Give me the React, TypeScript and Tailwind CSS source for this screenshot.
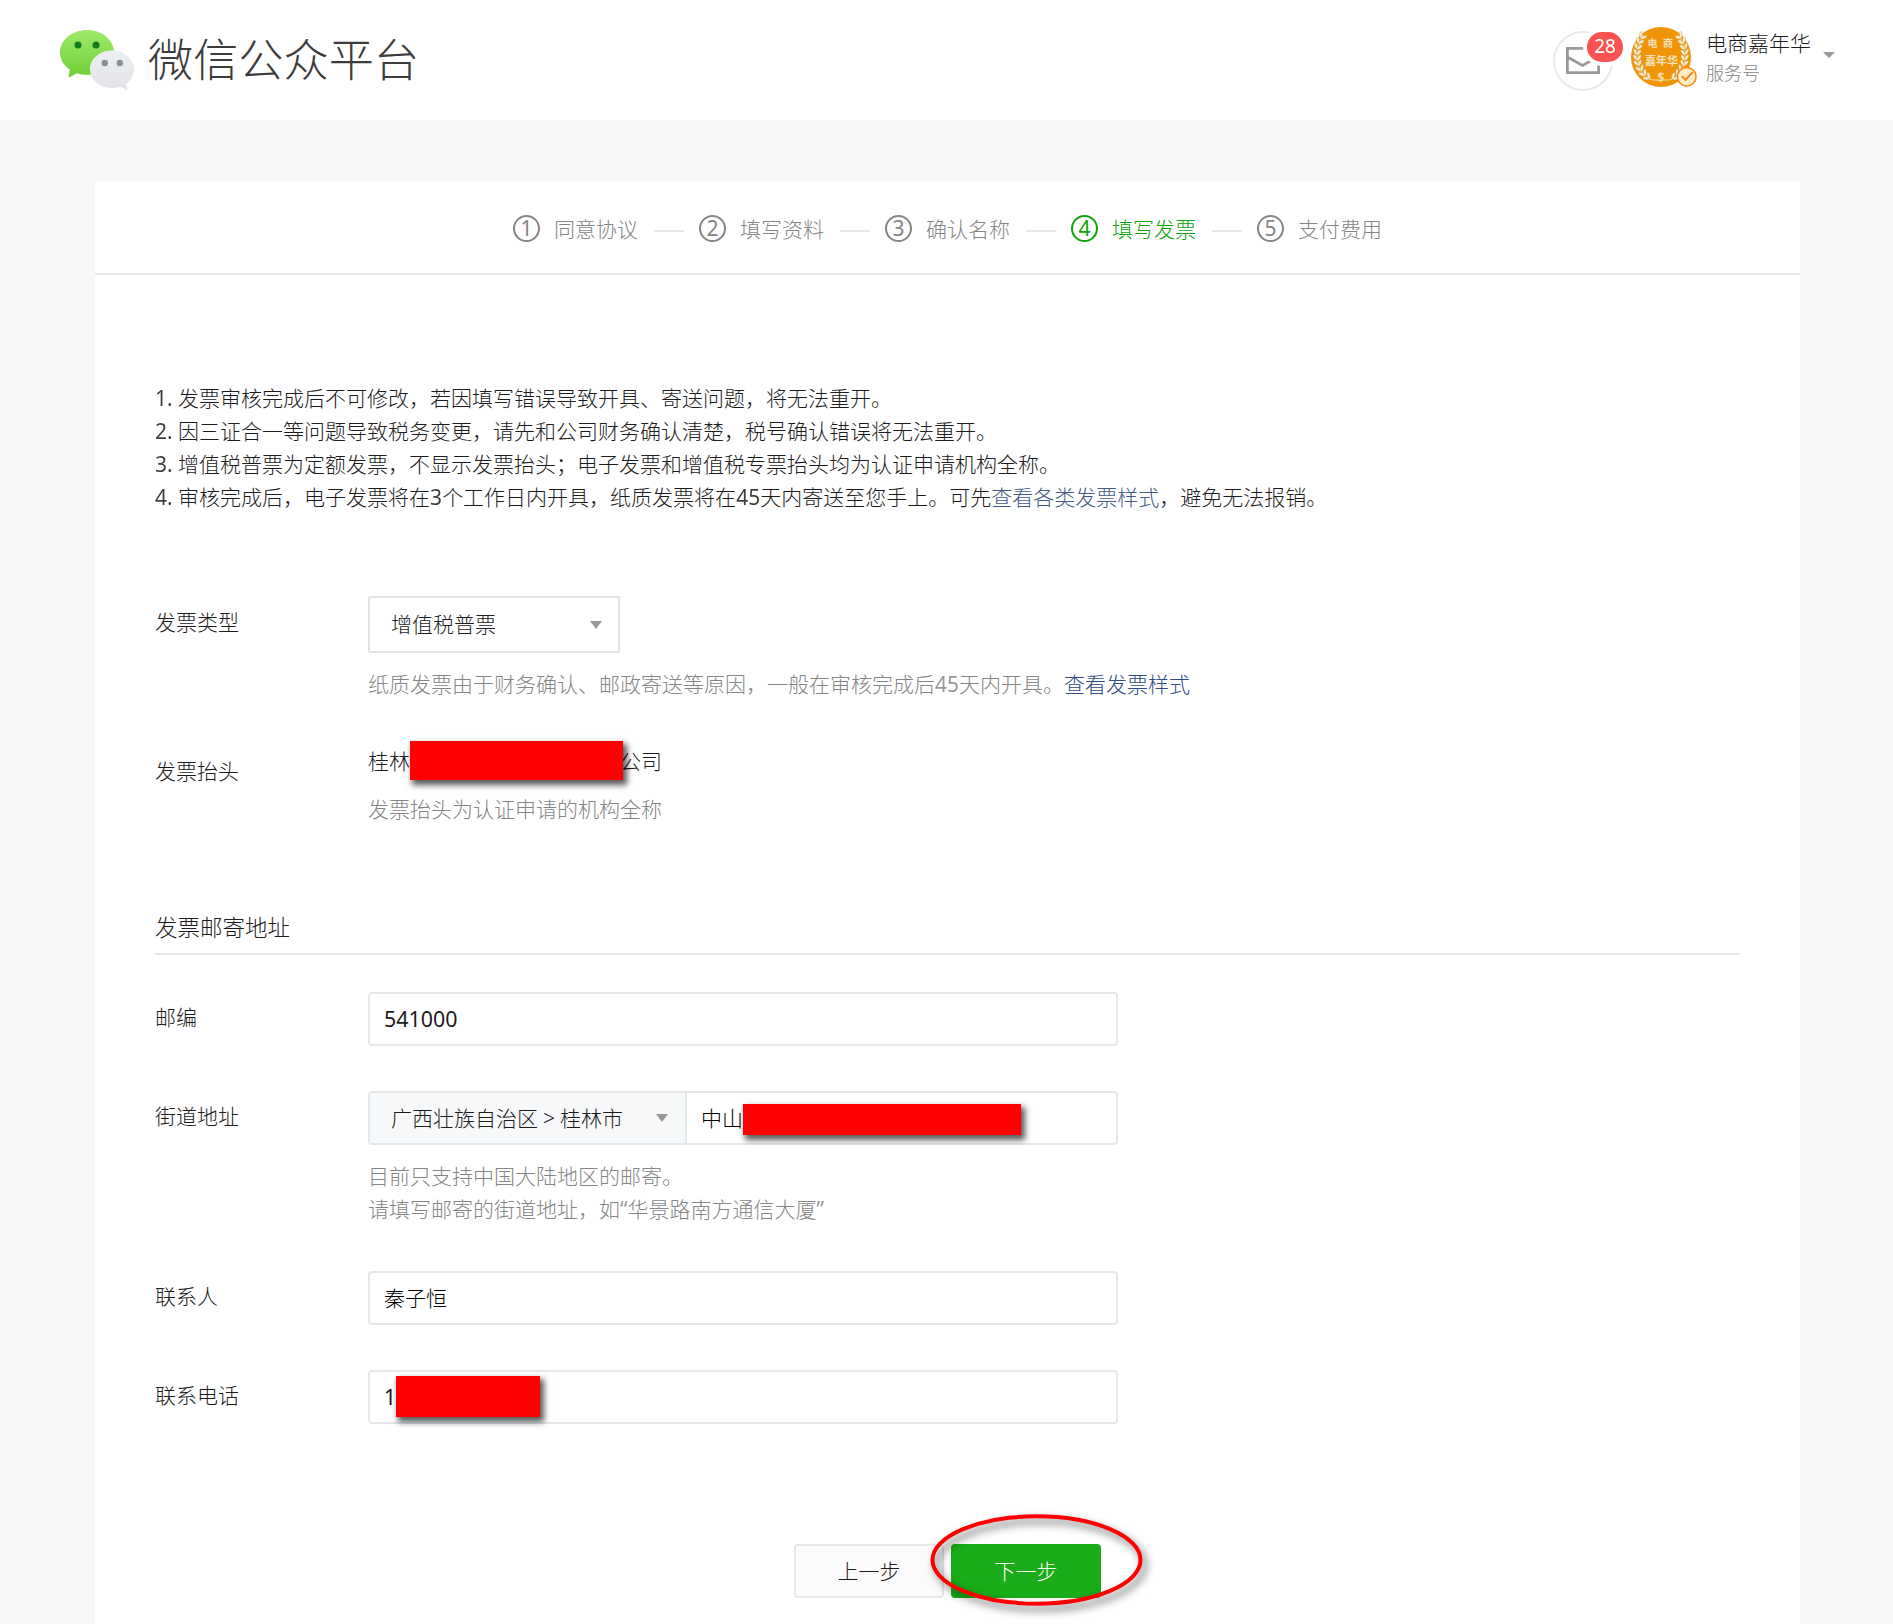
import type { ReactNode } from "react";

const steps = ["同意协议", "填写资料", "确认名称", "填写发票", "支付费用"];
const activeStep = 3;

function Logo() {
  return (
    <svg className="h-[62px] w-[76px]" viewBox="0 0 76 62">
      <defs>
        <linearGradient id="green" x1="0" y1="0" x2="0" y2="1">
          <stop offset="0" stopColor="#9eea6a" />
          <stop offset="1" stopColor="#71cf35" />
        </linearGradient>
        <linearGradient id="silver" x1="0" y1="0" x2="0" y2="1">
          <stop offset="0" stopColor="#eeeff6" />
          <stop offset="1" stopColor="#e2e4e6" />
        </linearGradient>
      </defs>
      <path
        fill="url(#green)"
        d="M27 0C12 0 0 10 0 22.500C0 29.500 3.800 35.500 9.800 39.500L8.600 46.200C8.500 47.200 9.300 47.500 10 47L17 43.300C20.200 44.300 23.500 44.800 27 44.800C42 44.800 54 35 54 22.500C54 10 42 0 27 0Z"
      />
      <circle cx="18" cy="15" r="3.500" fill="#147a1e" />
      <circle cx="36" cy="15" r="3.500" fill="#147a1e" />
      <path
        fill="url(#silver)"
        d="M52 20.500C39.800 20.500 30 28.800 30 39.300C30 49.800 39.800 58 52 58C55 58 57.800 57.500 60.500 56.700L66.300 60C67 60.300 67.500 59.800 67.300 59.200L66.200 54C71 50.500 74 45.200 74 39.300C74 28.800 64.200 20.500 52 20.500Z"
      />
      <circle cx="44.800" cy="33" r="3.200" fill="#8a9095" />
      <circle cx="59.800" cy="33" r="3.200" fill="#8a9095" />
    </svg>
  );
}

function Mail() {
  return (
    <div className="relative h-[60px] w-[60px] shrink-0 rounded-full border-2 border-[#e7eaec]">
      <svg className="absolute top-[11px] left-[9px] h-[34px] w-[38px]" viewBox="0 0 38 34" fill="none" stroke="#9a9a9a" strokeWidth="2.800">
        <path d="M20 4.400H3.400V28.700H34.600V18" />
        <path d="M3.400 13L18.500 21.500L30 15" />
      </svg>
      <span className="absolute top-[-1px] left-[32px] flex h-[30px] w-9 items-center justify-center rounded-[15px] bg-[#fa5151] pb-px text-[19px] leading-none text-white ring-4 ring-white">
        28
      </span>
    </div>
  );
}

const leaves = [
  [12, 8, 38],
  [9, 13, 26],
  [7, 18.5, 14],
  [6, 24, 4],
  [6, 29.5, -5],
  [6.5, 35, -14],
  [8.5, 40.5, -25],
  [11.5, 45.5, -38],
  [15.5, 49.5, -52],
];

function Wreath() {
  return (
    <g>
      <path d="M13 8C3 20 3 42 16 50" stroke="#f7e0ac" strokeWidth="0.800" fill="none" />
      {leaves.map(([x, y, a], i) => (
        <g key={i} transform={`translate(${x} ${y}) rotate(${a})`} fill="#f8eccb" stroke="#b97a14" strokeWidth="0.300">
          <ellipse cx="-1.900" cy="0" rx="1.500" ry="3.400" transform="rotate(-30)" />
          <ellipse cx="2.400" cy="0" rx="1.500" ry="3.300" transform="rotate(34)" />
        </g>
      ))}
    </g>
  );
}

function Avatar() {
  return (
    <svg className="h-[62px] w-[68px] shrink-0" viewBox="0 0 68 62">
      <circle cx="30" cy="30" r="30" fill="#f09508" />
      <Wreath />
      <g transform="translate(60 0) scale(-1 1)">
        <Wreath />
      </g>
      <path d="M16 51Q22 54 27 53M33 53Q38 54 44 51" stroke="#f7e0ac" fill="none" />
      <g fill="#f3e2bb" fontWeight="700" textAnchor="middle">
        <text x="21.500" y="20" fontSize="10">电</text>
        <text x="37" y="20" fontSize="10">商</text>
        <text x="30.500" y="38" fontSize="11">嘉年华</text>
        <text x="30" y="55" fontSize="12">$</text>
      </g>
      <circle cx="55.700" cy="49.700" r="9.300" fill="#fdebc3" stroke="#fa8a14" strokeWidth="1.500" />
      <path d="M50.700 49.200L54.500 52.900L61.700 45.200" fill="none" stroke="#fa7d1a" strokeWidth="1.800" />
    </svg>
  );
}

function Caret({ className }: { className: string }) {
  return (
    <svg className={className} viewBox="0 0 12 8" preserveAspectRatio="none">
      <path d="M0 0H12L6 8Z" fill="#999" />
    </svg>
  );
}

function Num({ children }: { children: ReactNode }) {
  return <span className="font-normal opacity-85">{children}</span>;
}

function Row({ label, labelClass, className, children }: { label: string; labelClass: string; className: string; children: ReactNode }) {
  return (
    <div className={`flex ${className}`}>
      <div className={`w-[213px] shrink-0 ${labelClass}`}>{label}</div>
      <div>{children}</div>
    </div>
  );
}

const redaction = "absolute bg-[#ff0000] shadow-[3px_4px_6px_1px_rgba(0,0,0,0.65)]";
const field = "relative flex h-[54px] w-[750px] items-center rounded border-2 border-[#e4e8eb] bg-white pl-[14px] text-black";

export default function App() {
  return (
    <div className="flex h-[1624px] w-[1893px] flex-col overflow-hidden bg-[#f6f8f9] font-['Noto_Sans','Noto_Sans_CJK_SC',sans-serif] text-[21px] leading-[33px] text-[#1c1c1c]">
      <header className="flex h-[120px] shrink-0 items-start justify-between bg-white pr-[58px] pl-[60px]">
        <div className="flex pt-[30px]">
          <Logo />
          <h1 className="ml-[12px] text-[45.2px] leading-[60px] font-light whitespace-nowrap text-[#3c3c3c]">微信公众平台</h1>
        </div>
        <div className="flex">
          <div className="pt-[31px]">
            <Mail />
          </div>
          <div className="ml-[18px] pt-[27px]">
            <Avatar />
          </div>
          <div className="ml-[7px] w-[105px] pt-[27px] font-light whitespace-nowrap">
            <div className="leading-[32px]">电商嘉年华</div>
            <div className="text-[18px] leading-[28px] text-[#858585]">服务号</div>
          </div>
          <Caret className="mt-[52px] ml-3 h-1.5 w-3" />
        </div>
      </header>

      <main className="mt-[62px] mr-[93px] ml-[95px] flex-1 bg-white font-light">
        <ol className="flex h-[93px] justify-center border-b-2 border-[#e4e8eb] text-[#858585]">
          {steps.map((step, i) => (
            <li key={step} className={`flex items-start ${i === activeStep ? "text-[#0fa40e]" : ""}`}>
              {i > 0 && <span className="mt-12 mr-[15px] ml-4 h-0.5 w-[30px] bg-[#e4e8eb]" />}
              <span className="mt-[33px] flex h-[27px] w-[27px] items-center justify-center rounded-full border-2 border-current text-[21px] leading-none font-normal">
                {i + 1}
              </span>
              <span className="mt-[31px] ml-[14px] w-[84px] whitespace-nowrap">{step}</span>
            </li>
          ))}
        </ol>

        <div className="px-[60px] pt-[107px]">
          <ol className="whitespace-nowrap">
            <li><Num>1. </Num>发票审核完成后不可修改，若因填写错误导致开具、寄送问题，将无法重开。</li>
            <li><Num>2. </Num>因三证合一等问题导致税务变更，请先和公司财务确认清楚，税号确认错误将无法重开。</li>
            <li><Num>3. </Num>增值税普票为定额发票，不显示发票抬头；电子发票和增值税专票抬头均为认证申请机构全称。</li>
            <li>
              <Num>4. </Num>审核完成后，电子发票将在<Num>3</Num>个工作日内开具，纸质发票将在<Num>45</Num>天内寄送至您手上。可先
              <a className="text-[#445a88]">查看各类发票样式</a>，避免无法报销。
            </li>
          </ol>

          <Row label="发票类型" labelClass="pt-[10px]" className="mt-[82px]">
            <div className="flex h-[57px] w-[252px] items-center justify-between rounded-xs border-2 border-[#e1e4e6] pr-4 pl-[21px]">
              增值税普票
              <Caret className="h-2 w-3" />
            </div>
            <p className="mt-[15px] whitespace-nowrap text-[#858585]">
              纸质发票由于财务确认、邮政寄送等原因，一般在审核完成后<Num>45</Num>天内开具。
              <a className="text-[#2f4a85]">查看发票样式</a>
            </p>
          </Row>

          <Row label="发票抬头" labelClass="pt-[10px]" className="mt-[44px]">
            <div className="relative flex w-[294px] justify-between">
              <span>桂林</span>
              <span>公司</span>
              <span className={`${redaction} top-[-4px] left-[42px] h-[39px] w-[213px]`} />
            </div>
            <p className="mt-[15px] text-[#858585]">发票抬头为认证申请的机构全称</p>
          </Row>

          <h2 className="mt-[83px] h-[46px] border-b-2 border-[#e4e8eb] text-[22.5px] leading-[37px]">发票邮寄地址</h2>

          <Row label="邮编" labelClass="pt-[9px]" className="mt-[37px]">
            <div className={field}>
              <span className="pb-px text-[21.4px] font-normal text-[#1c1c1c]">541000</span>
            </div>
          </Row>

          <Row label="街道地址" labelClass="pt-[9px]" className="mt-[45px]">
            <div className="relative flex h-[54px] w-[750px] rounded border-2 border-[#e4e8eb]">
              <div className="flex w-[317px] items-center justify-between border-r-2 border-[#e4e8eb] bg-[#f6f8f9] pr-[17px] pl-[21px]">
                <span className="whitespace-nowrap [word-spacing:-0.5px]">广西壮族自治区 &gt; 桂林市</span>
                <Caret className="h-2 w-3" />
              </div>
              <div className="flex items-center pl-[14px] text-black">中山</div>
              <span className={`${redaction} top-[11px] left-[373px] h-[31px] w-[278px]`} />
            </div>
            <p className="mt-[15px] text-[#858585]">
              目前只支持中国大陆地区的邮寄。
              <br />
              请填写邮寄的街道地址，如<Num>“</Num>华景路南方通信大厦<Num>”</Num>
            </p>
          </Row>

          <Row label="联系人" labelClass="pt-[9px]" className="mt-[45px]">
            <div className={field}>秦子恒</div>
          </Row>

          <Row label="联系电话" labelClass="pt-[9px]" className="mt-[45px]">
            <div className={field}>
              <span className="font-normal text-[#1c1c1c]">1</span>
              <span className={`${redaction} top-[4px] left-[26px] h-[41px] w-[144px]`} />
            </div>
          </Row>

          <div className="relative mt-[120px] flex justify-center gap-[7px]">
            <button className="h-[54px] w-[150px] rounded border-2 border-[#e4e8eb] bg-[#fbfbfb]">上一步</button>
            <button className="h-[54px] w-[150px] rounded bg-[#1aad19] text-white">下一步</button>
            <svg className="pointer-events-none absolute top-[-36px] left-[766px] h-[114px] w-[236px] drop-shadow-[4px_5px_4px_rgba(0,0,0,0.6)]" viewBox="0 0 236 114">
              <ellipse cx="115.500" cy="52" rx="104" ry="43.700" fill="none" stroke="#ff0000" strokeWidth="4" />
            </svg>
          </div>
        </div>
      </main>
    </div>
  );
}
